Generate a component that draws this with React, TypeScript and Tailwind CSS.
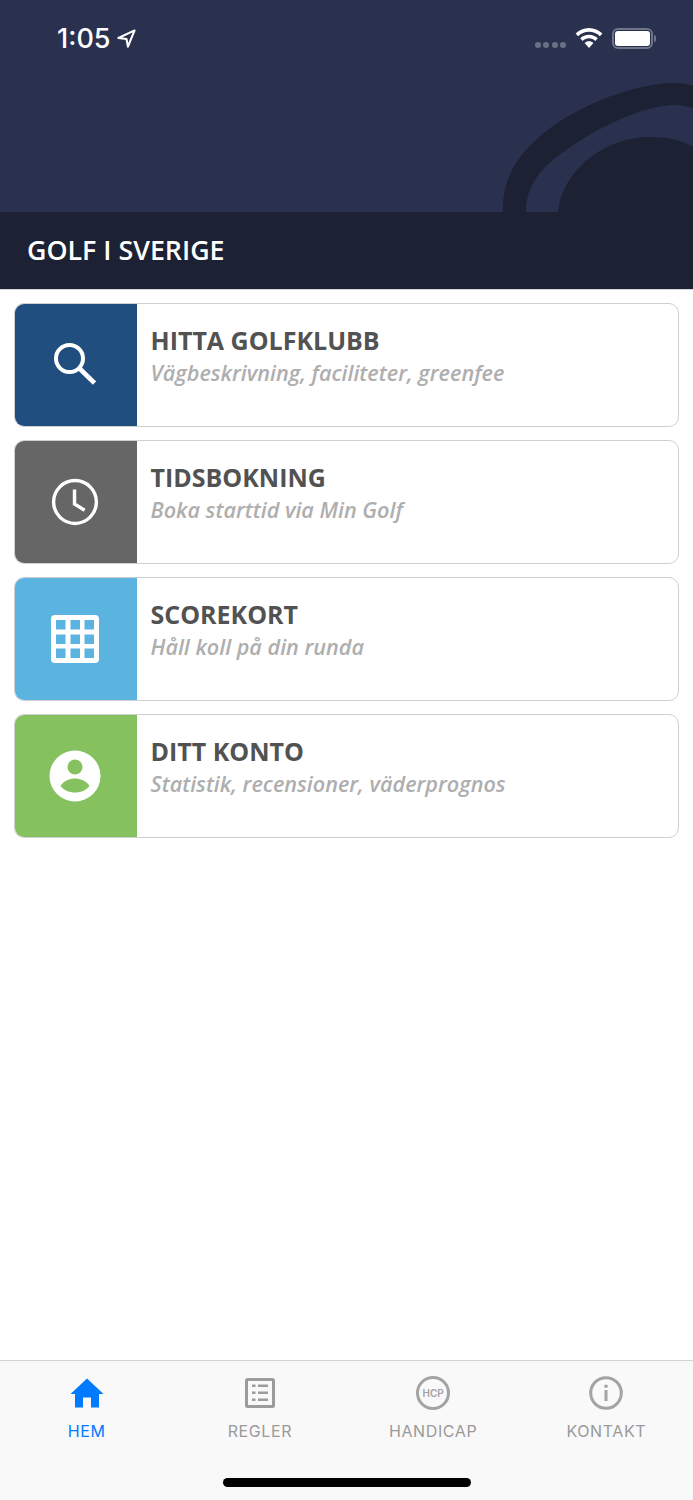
import React from "react";

const SearchIcon = () => (
  <svg className="-translate-x-px -translate-y-px" width="42" height="42" viewBox="0 0 42 42" fill="none" stroke="#fff">
    <circle cx="15.5" cy="15.5" r="13.5" strokeWidth="4" />
    <path d="M25 25 L40.5 40" strokeWidth="4.6" />
  </svg>
);
const ClockIcon = () => (
  <svg className="-translate-x-px" width="48" height="48" viewBox="0 0 50 50" fill="none" stroke="#fff">
    <circle cx="25" cy="25" r="22.3" strokeWidth="3.6" />
    <path d="M24.5 12 V27 L35 33.5" strokeWidth="3.6" />
  </svg>
);
const GridIcon = () => (
  <svg className="-translate-x-px" width="48" height="48" viewBox="0 0 48 48">
    <rect width="48" height="48" rx="4" fill="#fff" />
    {[5, 19.5, 33.5].map((y) =>
      [5, 19.5, 33.5].map((x) => <rect key={`${x}-${y}`} x={x} y={y} width="9.5" height="9.5" fill="#5bb3e0" />)
    )}
  </svg>
);
const UserIcon = () => (
  <svg className="-translate-x-px" width="52" height="52" viewBox="0 0 52 52">
    <circle cx="26" cy="26" r="25.5" fill="#fff" />
    <circle cx="26" cy="17" r="7.5" fill="#86c160" />
    <path d="M11.5 36 C15 30.5 21 28.5 26 28.5 C31 28.5 37 30.5 40.5 36 C37 40.5 31.5 42.5 26 42.5 C20.5 42.5 15 40.5 11.5 36 Z" fill="#86c160" />
  </svg>
);
const HomeIcon = () => (
  <svg width="34" height="30" viewBox="0 0 34 30">
    <path d="M17 0.5 L33.5 16 H29 V29.5 H21 V19.5 H13 V29.5 H5 V16 H0.5 Z" fill="#007aff" />
  </svg>
);
const RulesIcon = () => (
  <svg width="30" height="30" viewBox="0 0 30 30" fill="none">
    <rect x="1.5" y="1.5" width="27" height="27" rx="1" stroke="#9c9c9c" strokeWidth="3" />
    <path d="M7 7.8h3.5M13 7.8h10M7 14.8h3.5M13 14.8h10M7 21.8h3.5M13 21.8h10" stroke="#9c9c9c" strokeWidth="2.6" />
  </svg>
);
const HcpIcon = () => (
  <span className="relative flex h-[34px] w-[34px] items-center justify-center rounded-full border-[3px] border-[#a3a3a3]">
    <span className="text-[10px] font-semibold leading-none text-[#a3a3a3] [font-family:Inter,sans-serif]">HCP</span>
  </span>
);
const InfoIcon = () => (
  <svg width="34" height="34" viewBox="0 0 34 34" fill="none">
    <circle cx="17" cy="17" r="15.3" stroke="#a3a3a3" strokeWidth="3" />
    <circle cx="17" cy="10.2" r="1.8" fill="#a3a3a3" />
    <rect x="15.5" y="14" width="3" height="11" fill="#a3a3a3" />
  </svg>
);

const items = [
  { title: "HITTA GOLFKLUBB", sub: "Vägbeskrivning, faciliteter, greenfee", bg: "bg-[#1f4e7f]", Icon: SearchIcon },
  { title: "TIDSBOKNING", sub: "Boka starttid via Min Golf", bg: "bg-[#666666]", Icon: ClockIcon },
  { title: "SCOREKORT", sub: "Håll koll på din runda", bg: "bg-[#5bb3e0]", Icon: GridIcon },
  { title: "DITT KONTO", sub: "Statistik, recensioner, väderprognos", bg: "bg-[#86c160]", Icon: UserIcon },
];

const tabs = [
  { label: "HEM", Icon: HomeIcon, active: true },
  { label: "REGLER", Icon: RulesIcon, active: false },
  { label: "HANDICAP", Icon: HcpIcon, active: false },
  { label: "KONTAKT", Icon: InfoIcon, active: false },
];

export default function App() {
  return (
    <div className="flex h-[1500px] w-[693px] flex-col overflow-hidden bg-white [font-family:'Open_Sans',sans-serif]">
      <header className="relative flex h-[290px] flex-col border-b border-[#d4d6dc] bg-[#2a314e]">
        <svg className="absolute left-0 top-0" width="693" height="212" viewBox="0 0 693 212">
          <path
            d="M503 212 C502 176 519 151 553 126 C596 96 647 83 673 83 C682 83 688 84 693 86 L693 108 C686 106 680 105 672 105 C645 106 601 125 566 150 C540 168 526 186 526 212 Z"
            fill="#1c2133"
          />
          <path d="M558 212 C562 170 605 137 650 137 C668 137 682 140 693 147 V212 Z" fill="#1c2133" />
        </svg>
        <div className="relative flex h-[76px] items-center justify-between pl-[57px] pr-[40px]">
          <div className="flex items-center gap-[6px] text-white">
            <span className="text-[27px] font-medium leading-none [font-family:Inter,sans-serif]">1:05</span>
            <svg width="19" height="19" viewBox="0 0 20 20" fill="none" stroke="#fff" strokeWidth="2.2" strokeLinejoin="round">
              <path d="M18.5 1.5 L1.5 9.5 L10 10.5 L11.5 18.5 Z" />
            </svg>
          </div>
          <div className="flex items-end">
            <div className="mb-[1px] mr-[9px] flex gap-[2.5px]">
              {[0, 1, 2, 3].map((i) => (
                <span key={i} className="h-[6px] w-[6px] rounded-full bg-[#6a7084]" />
              ))}
            </div>
            <svg className="mr-[9px]" width="28" height="21" viewBox="0 0 28 22" fill="#fff">
              <path d="M14 0 C19.5 0 24.3 2.2 28 5.8 L25.4 8.6 C22.4 5.6 18.4 3.9 14 3.9 C9.6 3.9 5.6 5.6 2.6 8.6 L0 5.8 C3.7 2.2 8.5 0 14 0 Z" />
              <path d="M14 7 C17.6 7 20.8 8.4 23.2 10.7 L20.6 13.5 C18.9 11.8 16.6 10.8 14 10.8 C11.4 10.8 9.1 11.8 7.4 13.5 L4.8 10.7 C7.2 8.4 10.4 7 14 7 Z" />
              <path d="M14 14 C15.8 14 17.4 14.7 18.6 15.8 L14 21 L9.4 15.8 C10.6 14.7 12.2 14 14 14 Z" />
            </svg>
            <div className="relative flex h-[21px] w-[41px] items-center justify-center rounded-[6px] border-2 border-[#6f7588]">
              <span className="h-[15px] w-[35px] rounded-[3px] bg-white" />
              <span className="absolute -right-[5px] top-[5px] h-[7px] w-[2px] rounded-r-sm bg-[#6f7588]" />
            </div>
          </div>
        </div>
        <div className="relative mt-auto flex h-[77px] items-center bg-[#1c2133] pl-[27px]">
          <span className="text-[26.8px] font-semibold leading-none text-white">GOLF I SVERIGE</span>
        </div>
      </header>

      <main className="flex flex-1 flex-col gap-[13px] px-[14px] pt-[13px]">
        {items.map(({ title, sub, bg, Icon }) => (
          <div key={title} className="flex h-[124px] overflow-hidden rounded-[10px] border border-[#cfcfcf] bg-white">
            <div className={`flex w-[122px] shrink-0 items-center justify-center ${bg}`}>
              <Icon />
            </div>
            <div className="flex flex-col pl-[13.5px] pt-[18.5px]">
              <div className="text-[25px] font-bold leading-[34px] text-[#525252]">{title}</div>
              <div className="text-[21.6px] font-semibold italic leading-[32px] text-[#aeaeae]">{sub}</div>
            </div>
          </div>
        ))}
      </main>

      <nav className="relative h-[140px] border-t border-[#d3d3d3] bg-[#f9f9f9] [font-family:Inter,sans-serif]">
        <div className="grid grid-cols-4 pt-[15px]">
          {tabs.map(({ label, Icon, active }) => (
            <div key={label} className="flex flex-col items-center">
              <div className="flex h-[34px] items-center justify-center">
                <Icon />
              </div>
              <span className={`mt-[11px] text-[16px] leading-[20px] tracking-[0.6px] ${active ? "text-[#007aff]" : "text-[#9a9a9a]"}`}>{label}</span>
            </div>
          ))}
        </div>
        <div className="absolute bottom-[13px] left-[223px] h-[9px] w-[248px] rounded-full bg-black" />
      </nav>
    </div>
  );
}
